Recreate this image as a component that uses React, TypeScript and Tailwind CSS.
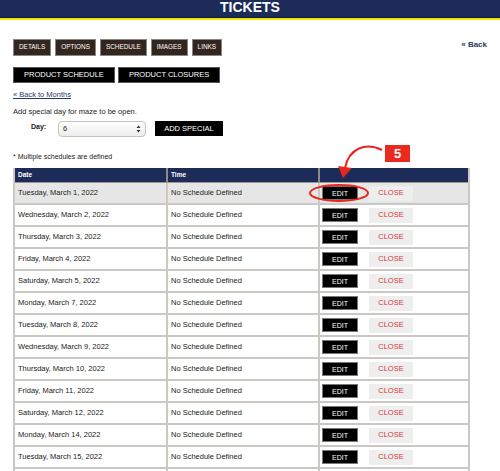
import React from "react";

const rows = [
  "Tuesday, March 1, 2022",
  "Wednesday, March 2, 2022",
  "Thursday, March 3, 2022",
  "Friday, March 4, 2022",
  "Saturday, March 5, 2022",
  "Monday, March 7, 2022",
  "Tuesday, March 8, 2022",
  "Wednesday, March 9, 2022",
  "Thursday, March 10, 2022",
  "Friday, March 11, 2022",
  "Saturday, March 12, 2022",
  "Monday, March 14, 2022",
  "Tuesday, March 15, 2022",
  "Wednesday, March 16, 2022",
];

const tabs = ["DETAILS", "OPTIONS", "SCHEDULE", "IMAGES", "LINKS"];

export default function App() {
  return (
    <div className="relative w-[500px] min-h-[471px] bg-white font-['Liberation_Sans',Arial,sans-serif] text-[#222]">
      {/* Header */}
      <div className="h-[17px] bg-[#1d2b58] flex justify-center">
        <div className="text-[14px] leading-[14px] font-bold text-white">TICKETS</div>
      </div>
      <div className="h-[1px] bg-[#0f1a3d]" />
      <div className="h-[2px] bg-[#f3e40c]" />

      <div className="px-[13px]">
        {/* Tabs + back */}
        <div className="flex items-start justify-between mt-[19px]">
          <div className="flex gap-[4px]">
            {tabs.map((t) => (
              <div
                key={t}
                className="h-[17px] px-[5px] flex items-center bg-[#33261f] border border-[#8a8683] text-white text-[6.4px] leading-none"
              >
                {t}
              </div>
            ))}
          </div>
          <div className="mt-[1px] text-[8px] leading-[10px] font-bold text-[#2c3a68]">« Back</div>
        </div>

        <div className="flex gap-[3px] mt-[11px]">
          <div className="h-[16px] px-[10px] flex items-center bg-black border border-[#555] text-white text-[7.5px] leading-none">
            PRODUCT SCHEDULE
          </div>
          <div className="h-[16px] px-[10px] flex items-center bg-black border border-[#555] text-white text-[7.5px] leading-none">
            PRODUCT CLOSURES
          </div>
        </div>

        <div className="mt-[7px] text-[7.5px] leading-[10px] text-[#2b3a6b] underline">« Back to Months</div>
        <div className="mt-[7px] text-[7.5px] leading-[10px]">Add special day for maze to be open.</div>

        <div className="flex items-start mt-[4px]">
          <div className="ml-[18px] mt-[1px] text-[7px] leading-[10px] font-bold w-[27px]">Day:</div>
          <div className="w-[88px] h-[16px] rounded-[4px] border border-[#c4c4c4] bg-gradient-to-b from-white to-[#ececec] flex items-center justify-between pl-[4px] pr-[4px]">
            <span className="text-[7.5px] leading-none">6</span>
            <svg width="5" height="8" viewBox="0 0 5 8">
              <path d="M0.5 3 L2.5 0.5 L4.5 3 Z" fill="#333" />
              <path d="M0.5 5 L2.5 7.5 L4.5 5 Z" fill="#333" />
            </svg>
          </div>
          <div className="ml-[9px] w-[68px] h-[15px] bg-black flex items-center justify-center text-white text-[7.5px] leading-none">
            ADD SPECIAL
          </div>
        </div>

        <div className="mt-[15px] text-[7px] leading-[10px]">* Multiple schedules are defined</div>

        {/* Table */}
        <div className="mt-[6px] w-[457px] border-l-2 border-r-2 border-[#cbc7c3]">
          <div className="grid grid-cols-[151px_152px_150px] h-[15px] bg-[#1d2b58] border-b border-[#9a9690]">
            <div className="pl-[3px] flex items-center text-white font-bold text-[6.5px]">Date</div>
            <div className="pl-[3px] flex items-center text-white font-bold text-[6.5px] border-l-2 border-[#8d8a88]">Time</div>
            <div className="border-l-2 border-[#8d8a88]" />
          </div>
          {rows.map((d, i) => (
            <div
              key={d}
              className={`grid grid-cols-[151px_152px_150px] h-[22px] border-b-2 border-[#cbc7c3] ${i === 0 ? "bg-[#e6e6e6]" : "bg-white"}`}
            >
              <div className="pl-[3px] flex items-center text-[7.5px]">{d}</div>
              <div className="pl-[3px] flex items-center text-[7.5px] border-l-2 border-[#cbc7c3]">No Schedule Defined</div>
              <div className="pl-[2px] flex items-center gap-[11px] border-l-2 border-[#cbc7c3]">
                <div className="w-[36px] h-[14px] bg-black border border-[#777] flex items-center justify-center text-white text-[7px] leading-none">
                  EDIT
                </div>
                <div className="w-[44px] h-[15px] bg-[#eeeeee] flex items-center justify-center text-[#d7353b] text-[7.5px] leading-none">
                  CLOSE
                </div>
              </div>
            </div>
          ))}
        </div>
      </div>

      {/* Annotation overlay */}
      <svg
        className="absolute left-0 top-0 pointer-events-none"
        width="500"
        height="471"
        viewBox="0 0 500 471"
      >
        <ellipse cx="339" cy="193" rx="29" ry="8" fill="none" stroke="#e8261f" strokeWidth="2" />
        <path d="M382 150 C 366 142, 349 148, 345 168" fill="none" stroke="#e8261f" strokeWidth="2" />
        <polygon points="343,178 338,166 352,168" fill="#e8261f" />
      </svg>
      <div className="absolute left-[385px] top-[145px] w-[25px] h-[17px] bg-[#ea2a1f] flex items-center justify-center text-white font-bold text-[13px] leading-none">
        5
      </div>
    </div>
  );
}
